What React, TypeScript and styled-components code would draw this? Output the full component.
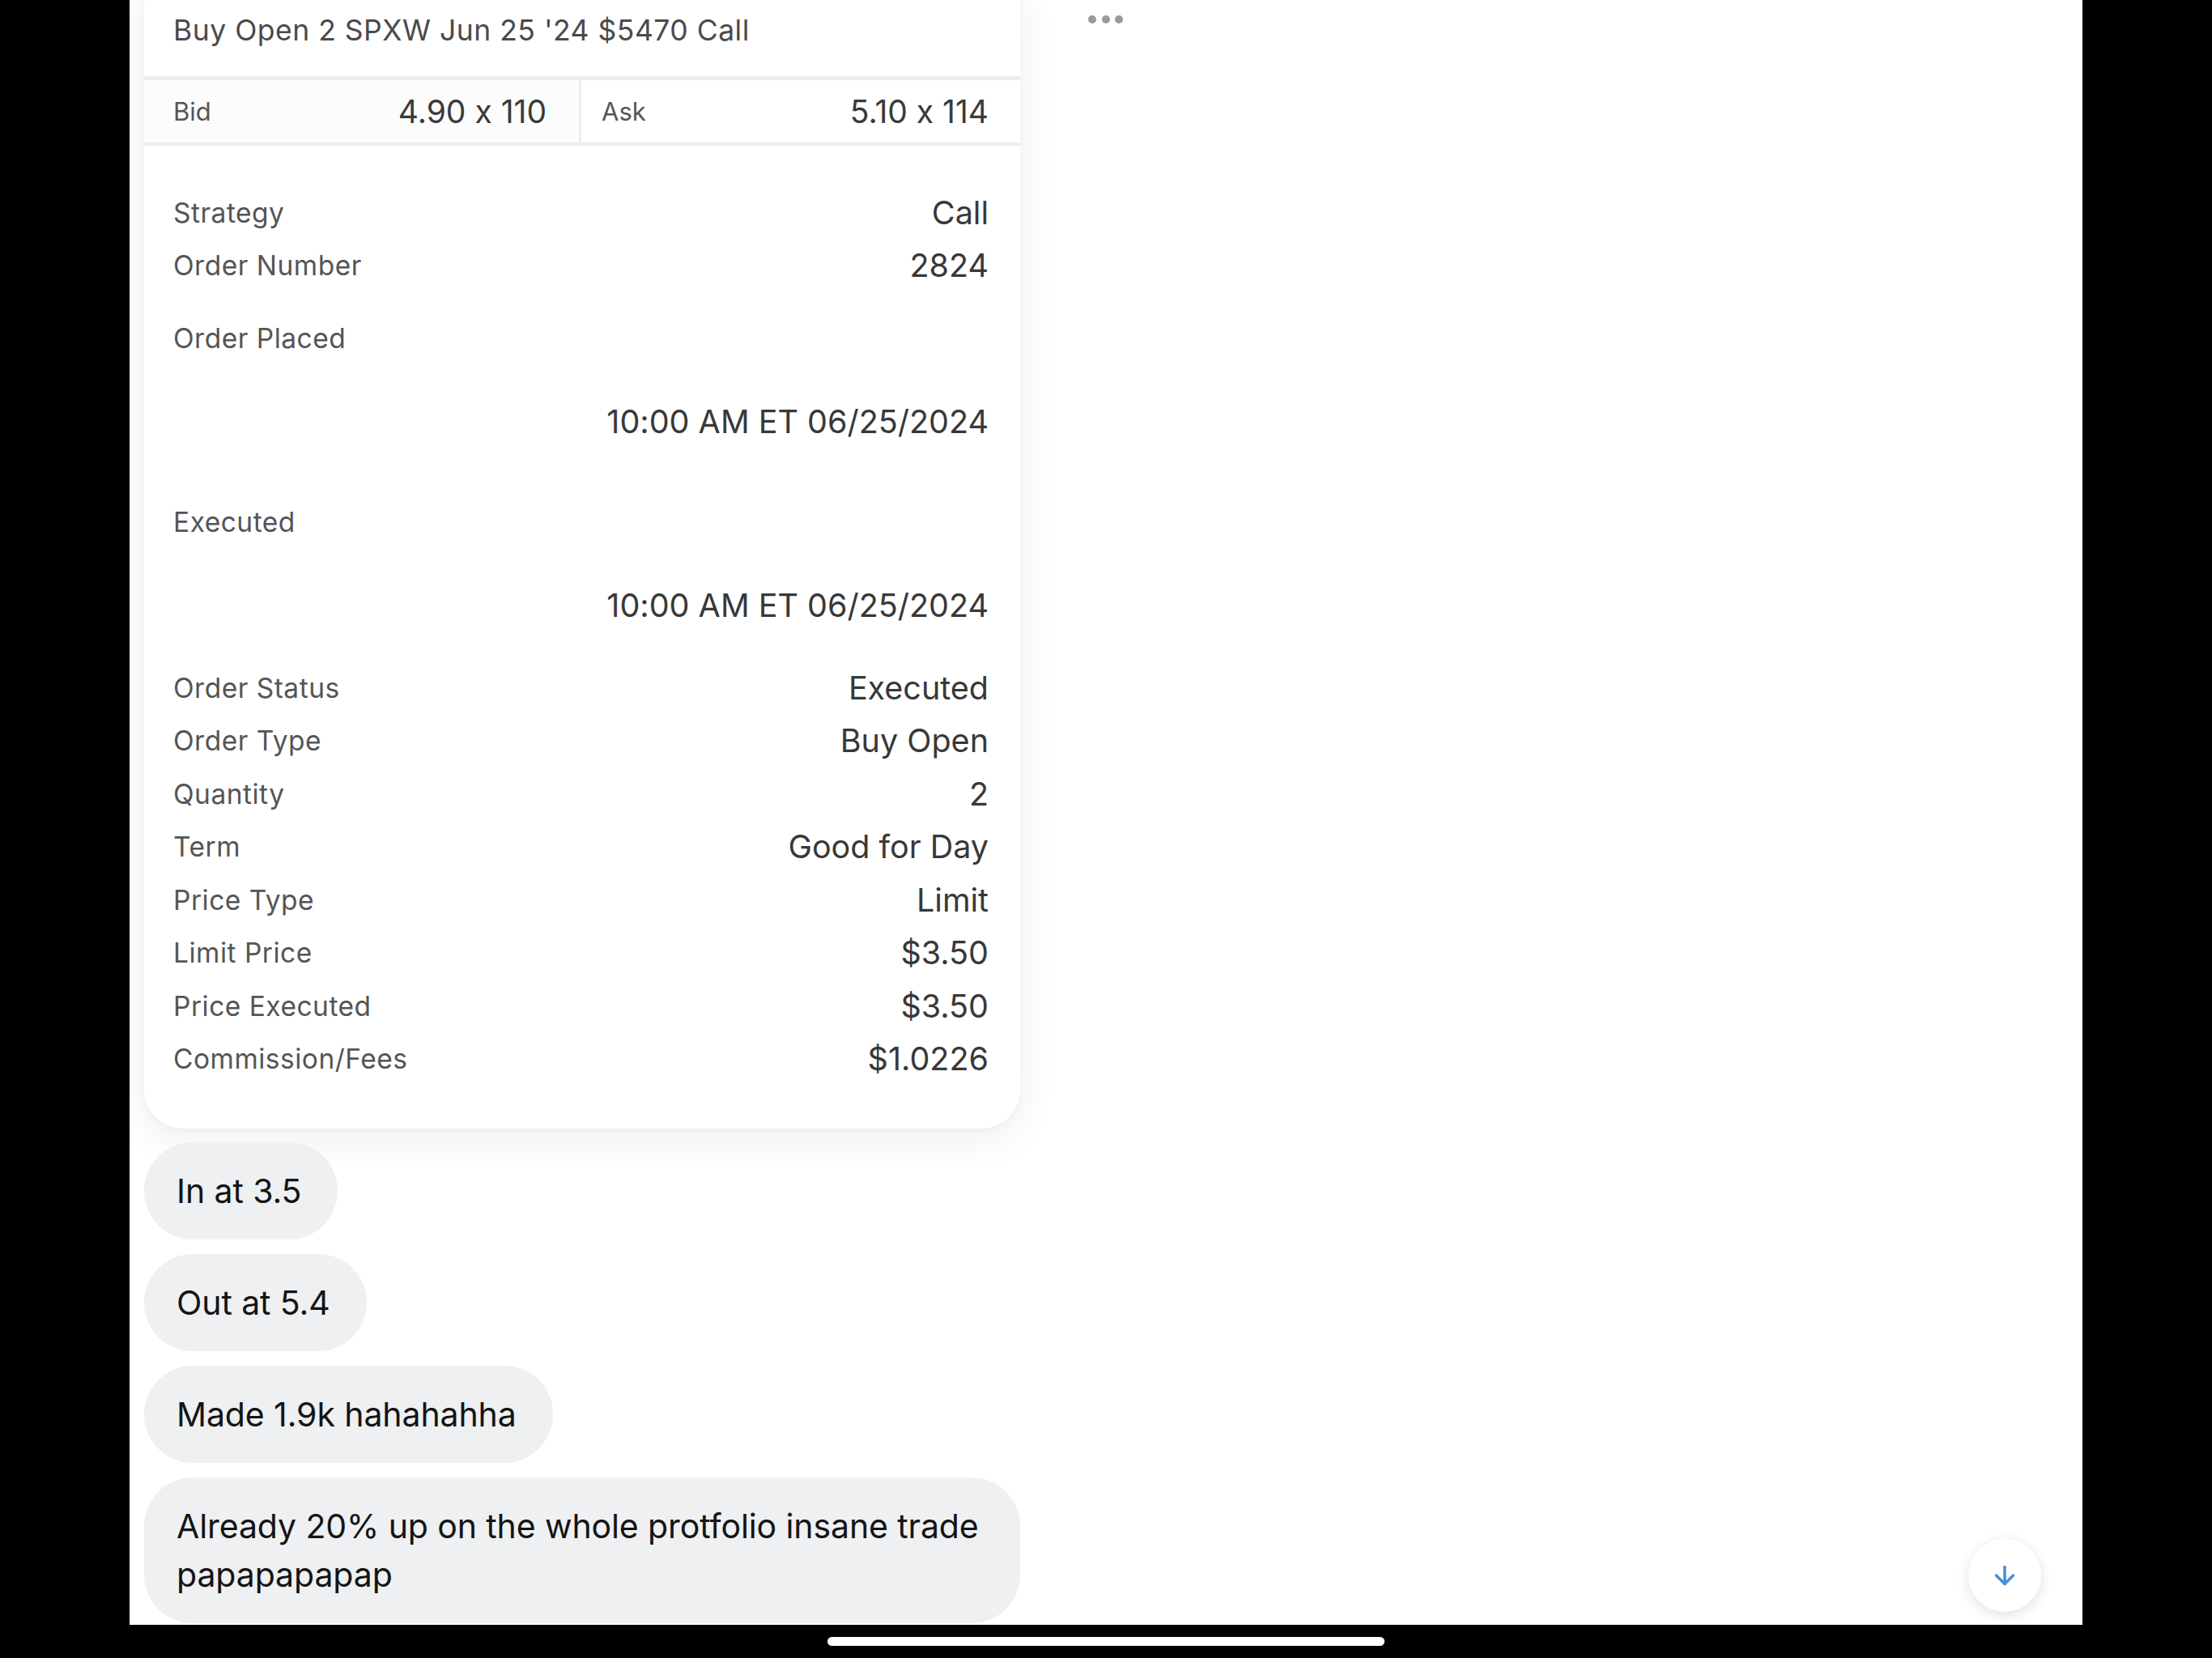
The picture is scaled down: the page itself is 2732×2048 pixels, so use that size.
import styled, { createGlobalStyle } from 'styled-components';
import { ArrowDown } from 'lucide-react';

const GlobalStyle = createGlobalStyle`
	html, body {
		margin: 0;
		padding: 0;
		background: #000;
	}
	* {
		box-sizing: border-box;
	}
`;

type Detail = {
	label: string;
	value: string;
	stacked?: boolean;
	top?: number;
};

const details: Detail[] = [
	{ label: 'Strategy', value: 'Call' },
	{ label: 'Order Number', value: '2824' },
	{ label: 'Order Placed', value: '10:00 AM ET 06/25/2024', stacked: true, top: 24 },
	{ label: 'Executed', value: '10:00 AM ET 06/25/2024', stacked: true, top: 58 },
	{ label: 'Order Status', value: 'Executed', top: 36 },
	{ label: 'Order Type', value: 'Buy Open' },
	{ label: 'Quantity', value: '2' },
	{ label: 'Term', value: 'Good for Day' },
	{ label: 'Price Type', value: 'Limit' },
	{ label: 'Limit Price', value: '$3.50' },
	{ label: 'Price Executed', value: '$3.50' },
	{ label: 'Commission/Fees', value: '$1.0226' },
];

const messages = [
	'In at 3.5',
	'Out at 5.4',
	'Made 1.9k hahahahha',
	'Already 20% up on the whole protfolio insane trade papapapapap',
];

const App = () => {
	return (
		<Screen>
			<GlobalStyle />
			<Viewport>
				<SideBar />
				<ChatPane>
					<Thread>
						<MessageRow>
							<OrderCard>
								<CardHeader>Buy Open 2 SPXW Jun 25 '24 $5470 Call</CardHeader>
								<Band $size={5} />
								<QuoteRow>
									<QuoteCell $left>
										<QuoteLabel>Bid</QuoteLabel>
										<QuoteValue>4.90 x 110</QuoteValue>
									</QuoteCell>
									<QuoteCell>
										<QuoteLabel>Ask</QuoteLabel>
										<QuoteValue>5.10 x 114</QuoteValue>
									</QuoteCell>
								</QuoteRow>
								<Band $size={4} />
								<DetailList>
									{details.map((d) =>
										d.stacked ? (
											<StackBlock key={d.label} $top={d.top}>
												<DetailRow>
													<Label>{d.label}</Label>
												</DetailRow>
												<DetailRow $top={38} $end>
													<Value>{d.value}</Value>
												</DetailRow>
											</StackBlock>
										) : (
											<DetailRow key={d.label} $top={d.top}>
												<Label>{d.label}</Label>
												<Value>{d.value}</Value>
											</DetailRow>
										)
									)}
								</DetailList>
							</OrderCard>
							<MoreDots>
								<Dot />
								<Dot />
								<Dot />
							</MoreDots>
						</MessageRow>
						{messages.map((m) => (
							<Bubble key={m}>{m}</Bubble>
						))}
					</Thread>
					<ScrollButton>
						<ArrowDown size={36} strokeWidth={2.3} color='#3f8fe0' />
					</ScrollButton>
				</ChatPane>
				<SideBar />
			</Viewport>
			<HomeBar>
				<HomeIndicator />
			</HomeBar>
		</Screen>
	);
};

const Screen = styled.div`
	width: 2732px;
	height: 2048px;
	display: flex;
	flex-direction: column;
	background: #000;
	overflow: hidden;
	font-family: Inter, 'Liberation Sans', sans-serif;
	font-feature-settings: 'calt' 0;
`;

const Viewport = styled.div`
	display: flex;
	height: 2007px;
`;

const SideBar = styled.div`
	width: 160px;
	flex-shrink: 0;
	background: #000;
`;

const ChatPane = styled.div`
	flex: 1;
	position: relative;
	background: #fff;
	overflow: hidden;
	padding-left: 18px;
`;

const Thread = styled.div`
	display: flex;
	flex-direction: column;
	align-items: flex-start;
	gap: 18px;
`;

const MessageRow = styled.div`
	display: flex;
	align-items: flex-start;
	margin-top: -40px;
	margin-bottom: -1px;
`;

const OrderCard = styled.div`
	width: 1082px;
	background: #fff;
	border-radius: 48px;
	box-shadow: 0 12px 50px rgba(0, 0, 0, 0.07), 0 2px 8px rgba(0, 0, 0, 0.03);
	overflow: hidden;
	padding-bottom: 53px;
`;

const CardHeader = styled.div`
	padding: 58px 36px 36px;
	font-size: 35.5px;
	line-height: 40px;
	color: #4a4a4a;
	letter-spacing: 0.5px;
`;

const Band = styled.div<{ $size: number }>`
	height: ${(p) => p.$size}px;
	background: #ececec;
`;

const QuoteRow = styled.div`
	display: grid;
	grid-template-columns: 540px 1fr;
	height: 77px;
`;

const QuoteCell = styled.div<{ $left?: boolean }>`
	display: flex;
	align-items: center;
	justify-content: space-between;
	padding: ${(p) => (p.$left ? '0 40px 0 36px' : '0 39px 0 25px')};
	border-right: ${(p) => (p.$left ? '3px solid #ececec' : 'none')};
	background: ${(p) => (p.$left ? '#fcfcfc' : '#fff')};
`;

const QuoteLabel = styled.span`
	font-size: 31px;
	color: #555;
`;

const QuoteValue = styled.span`
	font-size: 39px;
	color: #3a3a3a;
`;

const DetailList = styled.div`
	display: flex;
	flex-direction: column;
	padding: 50px 39px 0 36px;
`;

const StackBlock = styled.div<{ $top?: number }>`
	display: flex;
	flex-direction: column;
	margin-top: ${(p) => p.$top ?? 0}px;
`;

const DetailRow = styled.div<{ $top?: number; $end?: boolean }>`
	display: flex;
	align-items: center;
	justify-content: ${(p) => (p.$end ? 'flex-end' : 'space-between')};
	height: 65.5px;
	margin-top: ${(p) => p.$top ?? 0}px;
`;

const Label = styled.span`
	font-size: 33.5px;
	letter-spacing: 0.5px;
	color: #555;
`;

const Value = styled.span`
	font-size: 39.5px;
	color: #383838;
`;

const MoreDots = styled.div`
	display: flex;
	gap: 6.5px;
	margin: 59px 0 0 84px;
`;

const Dot = styled.span`
	width: 10px;
	height: 10px;
	border-radius: 50%;
	background: #9a9a9a;
`;

const Bubble = styled.div`
	max-width: 1082px;
	padding: 30px 45px 30px 40px;
	border-radius: 60px;
	background: #eef0f2;
	color: #141414;
	font-size: 41px;
	line-height: 60px;
	letter-spacing: -0.1px;
`;

const ScrollButton = styled.div`
	position: absolute;
	right: 51px;
	bottom: 16px;
	width: 90px;
	height: 90px;
	border-radius: 50%;
	background: #fff;
	display: flex;
	align-items: center;
	justify-content: center;
	box-shadow: 0 4px 16px rgba(0, 0, 0, 0.12);
`;

const HomeBar = styled.div`
	flex: 1;
	display: flex;
	justify-content: center;
	padding-top: 15px;
	background: #000;
`;

const HomeIndicator = styled.div`
	width: 688px;
	height: 11px;
	border-radius: 6px;
	background: #fff;
`;

export default App;
